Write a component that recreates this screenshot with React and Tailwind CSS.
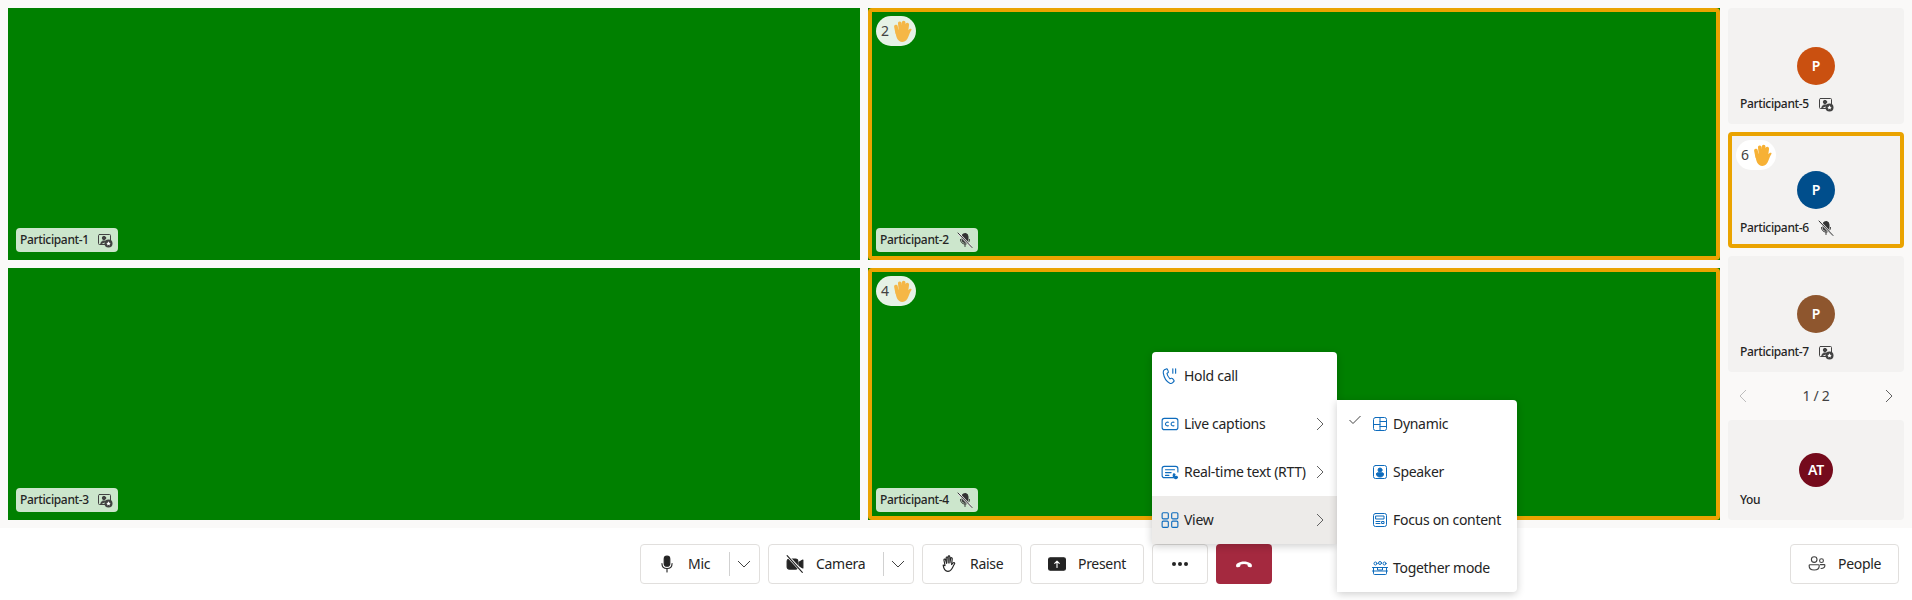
import React from 'react';

// bandeja de iconos dibujados a mano, estilo Fluent
const Svg = ({ size = 16, children, className = '' }) => (
  <svg width={size} height={size} viewBox="0 0 16 16" fill="none" stroke="currentColor" strokeWidth="1" strokeLinecap="round" strokeLinejoin="round" className={`shrink-0 ${className}`}>
    {children}
  </svg>
);

const PinnedVideo = () => (
  <Svg size={16} className="text-[#424242]">
    <rect x="1.5" y="2.5" width="12" height="10" rx="1" />
    <circle cx="7" cy="6" r="1.7" fill="currentColor" />
    <path d="M3.8 12.300c0-2.200 1.200-3.400 3.200-3.400 1 0 1.800.3 2.300.8" fill="currentColor" />
    <circle cx="11.500" cy="11.500" r="4" fill="#424242" stroke="none" />
    <path d="M11.500 9.300l.7 1.400 1.500.2-1.100 1 .3 1.500-1.400-.7-1.400.7.3-1.500-1.100-1 1.500-.2z" fill="#fff" stroke="none" />
  </Svg>
);

const MicOff = () => (
  <Svg size={16} className="text-[#333333]">
    <rect x="5" y="1.500" width="6" height="9" rx="3" fill="currentColor" />
    <path d="M3.500 7.500c0 2.800 2 4.500 4.500 4.500s4.500-1.700 4.500-4.500M8 12v2.500" />
    <path d="M2 2l12 12.500" stroke="#e8e8e8" strokeWidth="2.200" />
    <path d="M1 1l14 14.500" />
  </Svg>
);

const Hand = ({ dim = false }) => (
  <svg width="20" height="22" viewBox="3 1 15 17" className={`shrink-0 ${dim ? 'opacity-90' : ''}`} stroke="#f7b135" strokeLinecap="round" fill="none">
    <path d="M5 6L6 11M8 3.500L8.700 10M11 3L11 10M13.800 4.500L13 10.500" strokeWidth="2.800" />
    <path d="M4.800 9.500c0-1.500 8.700-2 8.700.5.600-1 1.500-1.700 2.500-2.200.8-.3 1.400.3 1 1-1 1.500-1.500 3-2.300 5-.9 2.700-2.500 4.200-4.700 4.200-3.500 0-5.200-4-5.200-8.500z" fill="#f7b135" stroke="none" />
  </svg>
);

const HandCount = ({ n, light }) => (
  <div className={`flex h-[30px] w-10 items-center gap-[4px] rounded-full pl-[5px] text-sm text-[#424242] ${light ? 'bg-white' : 'bg-white/90'}`}>
    {n}
    <Hand dim={!light} />
  </div>
);

const NameTag = ({ name, muted }) => (
  <div className="flex h-6 w-fit items-center gap-[8px] rounded-[4px] bg-white/80 pl-1 pr-[5px] text-xs font-medium tracking-[-0.35px] text-[#242424]">
    {name}
    {muted ? <MicOff /> : <PinnedVideo />}
  </div>
);

function VideoTile({ name, muted, hands }) {
  if (hands) {
    return (
      <div className="flex bg-[#008000]">
        <div className="flex flex-1 flex-col justify-between rounded-[4px] border-4 border-[#eaa300] p-1">
          <HandCount n={hands} />
          <NameTag name={name} muted={muted} />
        </div>
      </div>
    );
  }
  return (
    <div className="flex flex-col justify-end bg-[#008000] p-2">
      <NameTag name={name} muted={muted} />
    </div>
  );
}

function SideTile({ name, initial, color, muted, hands }) {
  return (
    <div className={`relative h-[116px] rounded-[4px] border-4 bg-[#f3f2f1] pt-[35px] ${hands ? 'border-[#eaa300]' : 'border-transparent'}`}>
      {hands && <div className="absolute left-1 top-1"><HandCount n={hands} light /></div>}
      <div className={`mx-auto flex h-[38px] w-[38px] items-center justify-center rounded-full text-sm font-semibold text-white ${color}`}>{initial}</div>
      <div className="mt-[11px] flex items-center gap-[9px] pl-2 text-xs font-medium tracking-[-0.35px] text-[#242424]">
        {name}
        {muted ? <MicOff /> : <PinnedVideo />}
      </div>
    </div>
  );
}

const Chevron = ({ className = '' }) => (
  <svg width="16" height="16" viewBox="0 0 16 16" fill="none" stroke="currentColor" className={`shrink-0 ${className}`}>
    <path d="M5 2l6 6-6 6" />
  </svg>
);

const ChevronDown = () => (
  <svg width="16" height="16" viewBox="0 0 16 16" fill="none" stroke="#424242" className="shrink-0">
    <path d="M2 5l6 6 6-6" />
  </svg>
);

// botones de la barra inferior
function ToolButton({ icon, label, width, split }) {
  return (
    <div className={`flex h-10 items-center rounded-[4px] border border-[#e1dfdd] bg-white pl-[17px] text-sm text-[#242424] ${width}`}>
      <span className="flex w-[18px] justify-center">{icon}</span>
      <span className="ml-[12px]">{label}</span>
      {split && (
        <>
          <span className="ml-auto h-6 w-px bg-[#d1d1d1]" />
          <span className="ml-[6px] mr-[7px] flex"><ChevronDown /></span>
        </>
      )}
    </div>
  );
}

const blue = 'text-[#0f6cbd]';

const menuItems = [
  {
    label: 'Hold call',
    icon: (
      <Svg size={18} className={blue}>
        <path d="M3 2.500l1.800-.8c.4-.1.7 0 .9.400l.8 1.800c.2.400.1.700-.2 1l-1 .9c.3 1.800 1.300 3.400 2.700 4.700l1.300-.5c.4-.1.700 0 1 .3l1.200 1.500c.3.400.2.800-.1 1.100l-1 1c-.7.700-1.700.900-2.600.5C4.700 13 2.700 9.500 2 5.300c-.1-1.200.2-2.300 1-2.800z" />
        <path d="M10.500 1.500v4M13 1.500v4" />
      </Svg>
    ),
  },
  {
    label: 'Live captions',
    sub: true,
    icon: (
      <Svg size={18} className={blue}>
        <rect x="1" y="3" width="14" height="10" rx="2" />
        <path d="M6.500 6.500a1.700 1.700 0 100 3M11.500 6.500a1.700 1.700 0 100 3" />
      </Svg>
    ),
  },
  {
    label: 'Real-time text (RTT)',
    sub: true,
    icon: (
      <Svg size={18} className={blue}>
        <path d="M11 13H3a2 2 0 01-2-2V5a2 2 0 012-2h10a2 2 0 012 2v3" />
        <path d="M4 6h8M4 8.500h5M4 11h3" />
        <path d="M11.500 9.500l1 .6-.5 1.200.9 1 1.200-.4.6 1c-.7 1.200-2 1.200-2.900.3-1-1-1-2.800-.3-3.700z" fill="currentColor" />
      </Svg>
    ),
  },
  {
    label: 'View',
    sub: true,
    active: true,
    icon: (
      <Svg size={18} className={blue}>
        <rect x="1" y="1.500" width="5.500" height="5.500" rx="1" />
        <rect x="9.500" y="1.500" width="5.500" height="5.500" rx="1" />
        <rect x="1" y="9" width="5.500" height="5.500" rx="1" />
        <rect x="9.500" y="9" width="5.500" height="5.500" rx="1" />
      </Svg>
    ),
  },
];

const viewItems = [
  {
    label: 'Dynamic',
    checked: true,
    icon: (
      <Svg className={blue}>
        <rect x="1.500" y="1.500" width="13" height="13" rx="2" />
        <path d="M8 1.500v13M1.500 8.500H8M8 5.500h6.500M8 10.500h6.500" />
      </Svg>
    ),
  },
  {
    label: 'Speaker',
    icon: (
      <Svg className={blue}>
        <rect x="1.500" y="1.500" width="13" height="13" rx="2" />
        <circle cx="8" cy="6" r="2" fill="currentColor" />
        <path d="M4.500 10c0-.8.500-1.200 1.200-1.200h4.600c.7 0 1.200.4 1.200 1.200 0 2-1.500 3-3.500 3s-3.500-1-3.500-3z" fill="currentColor" />
      </Svg>
    ),
  },
  {
    label: 'Focus on content',
    icon: (
      <Svg className={blue}>
        <rect x="1.500" y="1.500" width="13" height="13" rx="2" />
        <rect x="4" y="4" width="8" height="3" />
        <path d="M4 9.500h4M4 11.500h4" />
        <rect x="10" y="9.500" width="2" height="2" />
      </Svg>
    ),
  },
  {
    label: 'Together mode',
    icon: (
      <Svg className={blue}>
        <circle cx="3.500" cy="3.500" r="1.500" />
        <circle cx="8" cy="3" r="1.500" />
        <circle cx="12.500" cy="3.500" r="1.500" />
        <path d="M.5 7.500h15M1.500 7.500v6a1 1 0 001 1h11a1 1 0 001-1v-6M5.500 7.500v2.500h5V7.500M.5 11h15" />
      </Svg>
    ),
  },
];

function ViewMenu() {
  return (
    <div className="absolute bottom-full left-0 z-10 w-[185px] rounded-[4px] bg-white shadow-[0_2px_8px_rgba(0,0,0,0.2)]">
      {menuItems.map((item) => (
        <div key={item.label} className={`flex h-12 items-center pl-[9px] text-sm text-[#242424] ${item.active ? 'bg-[#edebe9]' : ''}`}>
          {item.icon}
          <span className="ml-[5px] whitespace-nowrap">{item.label}</span>
          {item.sub && <Chevron className="ml-auto mr-[9px] text-[#616161]" />}
        </div>
      ))}
      <div className="absolute left-full top-12 w-[180px] rounded-r-[4px] bg-white shadow-[0_2px_8px_rgba(0,0,0,0.2)]">
        {viewItems.map((item) => (
          <div key={item.label} className="flex h-12 items-center text-sm text-[#242424]">
            <span className="flex w-[35px] justify-center pb-2">
              {item.checked && (
                <svg width="14" height="14" viewBox="0 0 14 14" fill="none" stroke="#424242"><path d="M1.500 7l3.500 3.500 7.500-7.500" /></svg>
              )}
            </span>
            {item.icon}
            <span className="ml-[5px] whitespace-nowrap">{item.label}</span>
          </div>
        ))}
      </div>
    </div>
  );
}

export default function App() {
  return (
    <div className="flex h-[600px] flex-col overflow-hidden bg-white font-['Noto_Sans',sans-serif] tracking-[-0.3px]">
      <div className="flex h-[528px] gap-2 bg-[#faf9f8] p-2">
        <div className="grid w-[1712px] grid-cols-2 grid-rows-2 gap-2">
          <VideoTile name="Participant-1" />
          <VideoTile name="Participant-2" muted hands="2" />
          <VideoTile name="Participant-3" />
          <VideoTile name="Participant-4" muted hands="4" />
        </div>
        <div className="flex w-[176px] flex-col">
          <div className="flex flex-col gap-2">
            <SideTile name="Participant-5" initial="P" color="bg-[#ca5010]" />
            <SideTile name="Participant-6" initial="P" color="bg-[#004e8c]" muted hands="6" />
            <SideTile name="Participant-7" initial="P" color="bg-[#8e562e]" />
          </div>
          <div className="flex h-12 shrink-0 items-center justify-between px-[7px] text-sm text-[#424242]">
            <Chevron className="rotate-180 text-[#bdbdbd]" />
            <span>1 / 2</span>
            <Chevron className="text-[#616161]" />
          </div>
          <div className="h-[100px] rounded-[4px] bg-[#f3f2f1] pt-[33px]">
            <div className="mx-auto flex h-[34px] w-[34px] items-center justify-center rounded-full bg-[#750b1c] text-sm font-semibold text-white">AT</div>
            <div className="mt-[5px] pl-3 text-xs font-medium tracking-[-0.35px] text-[#242424]">You</div>
          </div>
        </div>
      </div>

      <div className="grid h-[72px] grid-cols-[1fr_auto_1fr] items-center">
        <div />
        <div className="flex gap-2">
          <ToolButton
            width="w-[120px]"
            split
            label="Mic"
            icon={
              <Svg size={18} className="text-[#242424]">
                <rect x="5.500" y="1" width="5" height="9" rx="2.500" fill="currentColor" />
                <path d="M3.500 7.500c0 2.800 2 4.500 4.500 4.500s4.500-1.700 4.500-4.500M8 12v3" />
              </Svg>
            }
          />
          <ToolButton
            width="w-[146px]"
            split
            label="Camera"
            icon={
              <Svg size={18} className="text-[#242424]">
                <path d="M3 3.500h5.500a2 2 0 012 2v5a2 2 0 01-2 2H3a2 2 0 01-2-2v-5a2 2 0 012-2z" fill="currentColor" />
                <path d="M11.500 6.500l3.500-2v7l-3.500-2z" fill="currentColor" />
                <path d="M1.500 1l13 14" stroke="#fff" strokeWidth="2.500" />
                <path d="M1 .5l13.500 15" />
              </Svg>
            }
          />
          <ToolButton
            width="w-[100px]"
            label="Raise"
            icon={
              <Svg size={18} className="text-[#242424]">
                <path d="M4.500 9.500l-1-5a.7.7 0 011.400-.3l.9 3.300-.3-5a.7.7 0 011.400 0l.4 4.500V1.500a.7.7 0 011.400 0l.1 5.500.7-4a.7.7 0 011.400.2l-.6 5.300 1.400-1.500c.7-.7 1.800.1 1.200 1-.9 1.300-1.500 2.700-2.200 4-.7 1.300-1.900 2.500-3.700 2.500-3.100 0-3.900-3.200-4.200-5.500z" />
              </Svg>
            }
          />
          <ToolButton
            width="w-[114px]"
            label="Present"
            icon={
              <Svg size={18} className="text-[#242424]">
                <rect x="0.500" y="2.500" width="15" height="11" rx="1.500" fill="currentColor" />
                <path d="M8 11V5.500M6 7.500l2-2 2 2" stroke="#fff" />
              </Svg>
            }
          />
          <div className="relative">
            <div className="flex h-10 w-14 items-center justify-center gap-[2px] rounded-[4px] border border-[#e1dfdd] bg-white">
              <span className="h-[4px] w-[4px] rounded-full bg-[#242424]" />
              <span className="h-[4px] w-[4px] rounded-full bg-[#242424]" />
              <span className="h-[4px] w-[4px] rounded-full bg-[#242424]" />
            </div>
            <ViewMenu />
          </div>
          <div className="flex h-10 w-14 items-center justify-center rounded-[4px] bg-[#a4293f]">
            <svg width="18" height="18" viewBox="0 0 16 16" fill="#fff">
              <path d="M1 10c-.2-1.200.3-2.100 1.300-2.700C5.800 5.300 10.200 5.300 13.700 7.300c1 .6 1.500 1.500 1.300 2.700-.1.700-.7 1-1.300.9l-1.500-.3c-.6-.1-.9-.5-1-1.100l-.2-1c-1.900-.7-4-.7-6 0l-.2 1c-.1.600-.4 1-1 1.100l-1.500.3C1.700 11 1.100 10.700 1 10z" />
            </svg>
          </div>
        </div>
        <div className="flex justify-end pr-[13px]">
          <ToolButton
            width="w-[109px]"
            label="People"
            icon={
              <Svg size={18} className="text-[#424242]">
                <circle cx="5.500" cy="4" r="2.500" />
                <circle cx="12" cy="5" r="1.700" />
                <path d="M1 9.500c0-.5.400-.8.800-.8h7.400c.5 0 .8.300.8.800 0 2.500-2 3.800-4.500 3.800S1 12 1 9.500zM11 8.500h3.400c.4 0 .6.300.6.700 0 1.800-1.300 2.800-3.400 2.800" />
              </Svg>
            }
          />
        </div>
      </div>
    </div>
  );
}
